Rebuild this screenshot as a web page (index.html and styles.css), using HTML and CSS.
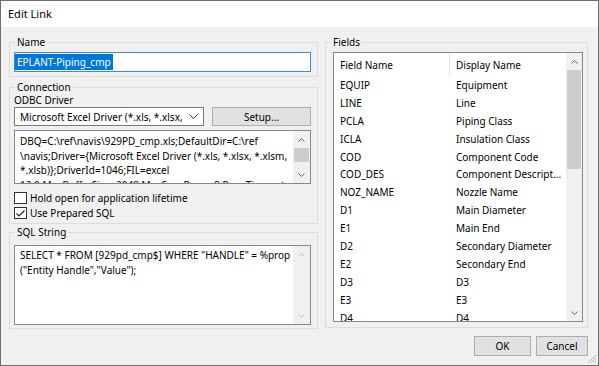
FILE: index.html
```html
<!DOCTYPE html>
<html lang="en">
<head>
  <meta charset="UTF-8">
  <title>Edit Link</title>
  <link rel="stylesheet" href="styles.css">
</head>
<body>
  <div class="window">
    <div class="titlebar">Edit Link</div>

    <div class="client">
      <div class="columns">
        <!-- Left column -->
        <div class="left">
          <fieldset class="group group-name">
            <legend>Name</legend>
            <div class="textbox focused"><span class="selected">EPLANT-Piping_cmp</span></div>
          </fieldset>

          <fieldset class="group group-conn">
            <legend>Connection</legend>
            <div class="label">ODBC Driver</div>
            <div class="driver-row">
              <div class="combo">
                <span class="combo-text">Microsoft Excel Driver (*.xls, *.xlsx,</span>
                <svg class="combo-arrow" width="9" height="5" viewBox="0 0 9 5"><path d="M0.5 0.5 L4.5 4.5 L8.5 0.5" fill="none" stroke="#333" stroke-width="1"/></svg>
              </div>
              <button class="btn setup">Setup...</button>
            </div>
            <div class="memo conn-string">
              <div class="memo-text">
                <div>DBQ=C:\ref\navis\929PD_cmp.xls;DefaultDir=C:\ref</div>
                <div>\navis;Driver={Microsoft Excel Driver (*.xls, *.xlsx, *.xlsm,</div>
                <div>*.xlsb)};DriverId=1046;FIL=excel</div>
                <div>12.0;MaxBufferSize=2048;MaxScanRows=8;PageTimeout</div>
              </div>
              <div class="vscroll">
                <div class="arrow up"><svg width="7" height="4" viewBox="0 0 7 4"><path d="M0.5 3.5 L3.5 0.5 L6.5 3.5" fill="none" stroke="#606060"/></svg></div>
                <div class="track"><div class="thumb conn-thumb"></div></div>
                <div class="arrow down"><svg width="7" height="4" viewBox="0 0 7 4"><path d="M0.5 0.5 L3.5 3.5 L6.5 0.5" fill="none" stroke="#606060"/></svg></div>
              </div>
            </div>
            <div class="checks">
              <label class="check"><span class="box"></span>Hold open for application lifetime</label>
              <label class="check"><span class="box"><svg width="11" height="11" viewBox="0 0 11 11"><path d="M1.5 5.5 L4 8 L9.5 2.5" fill="none" stroke="#222" stroke-width="1.2"/></svg></span>Use Prepared SQL</label>
            </div>
          </fieldset>

          <fieldset class="group group-sql">
            <legend>SQL String</legend>
            <div class="memo sql">
              <div class="memo-text">
                <div>SELECT * FROM [929pd_cmp$] WHERE "HANDLE" = %prop</div>
                <div>("Entity Handle","Value");</div>
              </div>
              <div class="vscroll disabled">
                <div class="arrow up"><svg width="7" height="4" viewBox="0 0 7 4"><path d="M0.5 3.5 L3.5 0.5 L6.5 3.5" fill="none" stroke="#bfbfbf"/></svg></div>
                <div class="track"></div>
                <div class="arrow down"><svg width="7" height="4" viewBox="0 0 7 4"><path d="M0.5 0.5 L3.5 3.5 L6.5 0.5" fill="none" stroke="#bfbfbf"/></svg></div>
              </div>
            </div>
          </fieldset>
        </div>

        <!-- Right column -->
        <div class="right">
          <fieldset class="group group-fields">
            <legend>Fields</legend>
            <div class="listview">
              <div class="list-body">
                <div class="list-head"><span class="col1">Field Name</span><span class="col2">Display Name</span></div>
                <div class="list-row"><span class="col1">EQUIP</span><span class="col2">Equipment</span></div>
                <div class="list-row"><span class="col1">LINE</span><span class="col2">Line</span></div>
                <div class="list-row"><span class="col1">PCLA</span><span class="col2">Piping Class</span></div>
                <div class="list-row"><span class="col1">ICLA</span><span class="col2">Insulation Class</span></div>
                <div class="list-row"><span class="col1">COD</span><span class="col2">Component Code</span></div>
                <div class="list-row"><span class="col1">COD_DES</span><span class="col2">Component Descript...</span></div>
                <div class="list-row"><span class="col1">NOZ_NAME</span><span class="col2">Nozzle Name</span></div>
                <div class="list-row"><span class="col1">D1</span><span class="col2">Main Diameter</span></div>
                <div class="list-row"><span class="col1">E1</span><span class="col2">Main End</span></div>
                <div class="list-row"><span class="col1">D2</span><span class="col2">Secondary Diameter</span></div>
                <div class="list-row"><span class="col1">E2</span><span class="col2">Secondary End</span></div>
                <div class="list-row"><span class="col1">D3</span><span class="col2">D3</span></div>
                <div class="list-row"><span class="col1">E3</span><span class="col2">E3</span></div>
                <div class="list-row"><span class="col1">D4</span><span class="col2">D4</span></div>
              </div>
              <div class="vscroll list-scroll">
                <div class="arrow up"><svg width="7" height="4" viewBox="0 0 7 4"><path d="M0.5 3.5 L3.5 0.5 L6.5 3.5" fill="none" stroke="#606060"/></svg></div>
                <div class="track"><div class="thumb list-thumb"></div></div>
                <div class="arrow down"><svg width="7" height="4" viewBox="0 0 7 4"><path d="M0.5 0.5 L3.5 3.5 L6.5 0.5" fill="none" stroke="#606060"/></svg></div>
              </div>
            </div>
          </fieldset>
        </div>
      </div>

      <div class="buttons">
        <button class="btn ok">OK</button>
        <button class="btn cancel">Cancel</button>
      </div>
    </div>

    <!-- size grip -->
    <svg class="grip" width="10" height="10" viewBox="0 0 10 10">
      <path d="M9 1 L1 9 M9 4 L4 9 M9 7 L7 9" stroke="#b5b5b5" stroke-width="1"/>
    </svg>
  </div>
</body>
</html>
```

FILE: styles.css
```css
* {
  box-sizing: border-box;
}
body {
  margin: 0;
  font-family: "Noto Sans", "Open Sans", sans-serif;
  font-size: 10px;
  color: #000;
  background: #f0f0f0;
}
.window {
  width: 599px;
  height: 366px;
  border: 1px solid #6e6e6e;
  background: #f0f0f0;
  display: flex;
  flex-direction: column;
  position: relative;
  overflow: hidden;
}
.titlebar {
  height: 26px;
  line-height: 26px;
  padding-left: 7px;
  background: #fff;
  font-size: 11px;
}
.client {
  flex: 1;
  padding: 8px 10px 0 8px;
}
.columns {
  display: flex;
  gap: 7px;
  align-items: flex-start;
}
.left {
  width: 309px;
  display: flex;
  flex-direction: column;
}
.right {
  width: 263px;
}

/* group boxes */
.group {
  margin: 0;
  min-width: 0;
  border: 1px solid #dcdcdc;
  padding: 0 6px 4px 4px;
}
.group legend {
  padding: 0 2px;
  margin-left: 1px;
  line-height: 14px;
}
.group-name {
  padding-top: 3px;
  padding-bottom: 4px;
}
.group-conn {
  margin-top: 3px;
  padding-bottom: 2px;
}
.group-sql {
  margin-top: 1px;
  padding-top: 6px;
  padding-bottom: 3px;
}
.group-fields {
  padding: 3px 4px 5px 7px;
}
.group-fields legend {
  margin-left: -2px;
}

/* controls */
.textbox {
  height: 20px;
  border: 1px solid #7a7a7a;
  background: #fff;
  padding: 1px 0 1px 0;
  line-height: 16px;
  white-space: nowrap;
  overflow: hidden;
}
.textbox.focused {
  border-color: #3c8ad8;
}
.selected {
  display: inline-block;
  padding: 0 2px 0 2px;
  background: #0078d7;
  color: #fff;
}
.label {
  line-height: 12px;
}
.driver-row {
  display: flex;
  gap: 8px;
  margin-top: 1px;
}
.combo {
  width: 190px;
  height: 19px;
  border: 1px solid #7a7a7a;
  background: #fff;
  display: flex;
  align-items: center;
  padding: 0 5px 0 5px;
}
.combo-text {
  flex: 1;
  white-space: nowrap;
  overflow: hidden;
}
.btn {
  height: 19px;
  padding: 0;
  font: inherit;
  color: #000;
  background: #e1e1e1;
  border: 1px solid #adadad;
}
.setup {
  flex: 1;
}

/* multi-line text boxes */
.memo {
  display: flex;
  border: 1px solid #828790;
  background: #fff;
  overflow: hidden;
}
.memo-text {
  flex: 1;
  min-width: 0;
  padding: 3px 0 0 5px;
  line-height: 14.5px;
  white-space: nowrap;
  overflow: hidden;
}
.conn-string {
  height: 54px;
  margin-top: 4px;
}
.sql {
  height: 80px;
}
.sql .memo-text {
  padding-top: 2px;
}

/* scroll bars */
.vscroll {
  width: 17px;
  flex: none;
  display: flex;
  flex-direction: column;
  background: #f0f0f0;
}
.vscroll .arrow {
  height: 17px;
  display: flex;
  align-items: center;
  justify-content: center;
}
.vscroll .track {
  flex: 1;
}
.thumb {
  margin: 0 1px;
  background: #cdcdcd;
}
.conn-thumb {
  height: 14px;
}
.list-scroll {
  width: 16px;
}
.list-thumb {
  height: 99px;
}

/* check boxes */
.checks {
  margin-top: 6px;
}
.check {
  display: flex;
  align-items: center;
  gap: 3px;
  height: 15.5px;
}
.box {
  width: 13px;
  height: 12px;
  border: 1px solid #333;
  background: #fff;
  display: flex;
  align-items: center;
  justify-content: center;
}

/* fields list */
.listview {
  display: flex;
  height: 270px;
  border: 1px solid #828790;
  background: #fff;
}
.list-body {
  flex: 1;
  min-width: 0;
  overflow: hidden;
}
.list-head,
.list-row {
  display: flex;
  white-space: nowrap;
}
.list-head {
  height: 24px;
  line-height: 24px;
}
.list-head .col1 {
  border-right: 1px solid #e5e5e5;
}
.list-row {
  height: 17.9px;
  line-height: 17.9px;
}
.col1 {
  width: 116px;
  padding-left: 6px;
  flex: none;
}
.list-head .col1 {
  width: 116px;
}
.col2 {
  flex: 1;
  padding-left: 6px;
  overflow: hidden;
}

/* dialog buttons */
.buttons {
  display: flex;
  justify-content: flex-end;
  gap: 5px;
  margin-top: 7px;
}
.ok {
  width: 57px;
  height: 20px;
}
.cancel {
  width: 52px;
  height: 20px;
}
.grip {
  position: absolute;
  right: 1px;
  bottom: 1px;
}
```
